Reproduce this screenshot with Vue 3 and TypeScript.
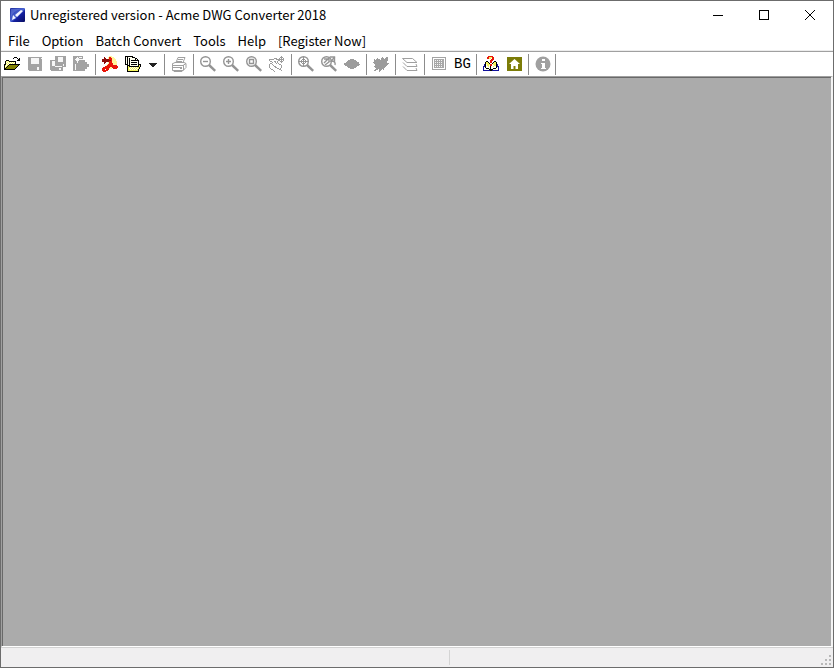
<script setup lang="ts">
type Tool = { kind: 'button'; id: string; label: string; disabled?: boolean } | { kind: 'sep'; id: string }

const menus: string[] = ['File', 'Option', 'Batch Convert', 'Tools', 'Help', '[Register Now]']

const button = (id: string, label: string, disabled = false): Tool => ({ kind: 'button', id, label, disabled })
const sep = (n: number): Tool => ({ kind: 'sep', id: `sep${n}` })

const tools: Tool[] = [
  button('open', 'Open'),
  button('save', 'Save', true),
  button('saveall', 'Save all', true),
  button('export', 'Export', true),
  sep(1),
  button('pdf', 'Convert to PDF'),
  button('batch', 'Batch convert'),
  button('more', 'More batch options'),
  sep(2),
  button('print', 'Print', true),
  sep(3),
  button('zoomout', 'Zoom out', true),
  button('zoomin', 'Zoom in', true),
  button('zoomwin', 'Zoom window', true),
  button('pan', 'Pan', true),
  sep(4),
  button('extents', 'Zoom extents', true),
  button('previous', 'Zoom previous', true),
  button('view', 'View', true),
  sep(5),
  button('regen', 'Regenerate', true),
  sep(6),
  button('layers', 'Layers', true),
  sep(7),
  button('grid', 'Layout', true),
  button('bg', 'Background'),
  sep(8),
  button('help', 'Help'),
  button('home', 'Home page'),
  sep(9),
  button('about', 'About', true),
  sep(10),
]

const palette: Record<string, string> = {
  k: '#000000', y: '#f4f45c', w: '#fffff0', o: '#808000', g: '#9c9c9c',
  r: '#e81408', d: '#8c0c08', l: '#fff59a', b: '#10109c', c: '#c8c8c8',
}

const bitmaps: Record<string, string[]> = {
  open: [
    '................',
    '..........kkk...',
    '.........k...k.k',
    '..............kk',
    '..kkk........kkk',
    '.kywykkkkkkk....',
    '.kwywywywywk....',
    '.kywywywywyk....',
    'kkwywkkkkkkkkkkk',
    'kywykoooooooook.',
    'kwykoooooooook..',
    'kykoooooooook...',
    'kkoooooooook....',
    'kkkkkkkkkkk.....',
  ],
  pdf: [
    '.......lll......',
    '..d...lrrlll....',
    '..dd..lrrrlll...',
    'dddddddrrrllll..',
    'dddddddddrllll..',
    'dddddddrrrlllll.',
    '..dd..lrrrlllll.',
    '..d...lrrrrllll.',
    '.....lrrrrrllll.',
    '....lrrrrrrrrrr.',
    '...rrrrrrrrrrrrr',
    '.rrrrrrrllrrrrrr',
    'rrrrrrrlll.rrrr.',
    'rrr.rrr.........',
    'rrrrrr..........',
    '.rrr............',
  ],
  batch: [
    'kkkkkkkk........',
    'kwkwwwwkkk......',
    'kwkwkwwwwwkk....',
    'kwkwkwwwwwkwk...',
    'kwkwkwkkkkkkkk..',
    'kwkwkwwwwwwwwk..',
    'kwkwkwkkkkkkwk..',
    'kwkwkwwwwwwwwk..',
    'kkkwkwkkkkkkwkkk',
    '..kkkwwwwwwwwkyk',
    '..kykkkkkkkkkkyk',
    '..kyywywywywyyk.',
    '..kywywywywywyk.',
    '..kyywywywywyk..',
    '..kyyyyyyyyyyk..',
    '..kkkkkkkkkkkk..',
  ],
  pan: [
    '............g...',
    '...........ggg..',
    '.....ggg..g.g.g.',
    'ggggg..gggggggg.',
    'g........gg.g.g.',
    '.gg..gg.g..ggg..',
    '...g..g.g...g...',
    '.gg....g.g......',
    'g..g......gg....',
    'g...g.......g...',
    'g....gg.....g...',
    'g.....gg....g...',
    '.g......gg.g....',
    '..gg......gg....',
    '....g.......g...',
    '.....g..........',
  ],
  view: [
    '................',
    '................',
    '................',
    '......gggg......',
    '....gggggggg....',
    '...gggggggggg...',
    '..ggggggggggggg.',
    'ggggggggggggggg.',
    'gggggggggggggggg',
    '.gggggggggggggg.',
    '...gggggggggg...',
    '....gggggggg....',
    '......gggg......',
  ],
  regen: [
    '................',
    '.........g...gg.',
    '....g...ggg.ggg.',
    '.g.gggg.ggggggg.',
    '.gggggggggggggg.',
    '.ggggggggggggg..',
    'gggggggggggggg..',
    '.ggggggggggggggg',
    '..ggggggggggggg.',
    '..gggggggggggg..',
    '.gggggggggggg...',
    '..gggggggggg....',
    '...gggggggg.....',
    '..ggg.ggg.g.....',
    '.gg...gg........',
    '......g.........',
  ],
  help: [
    '.....rrrrr......',
    '....rryyyrr.....',
    '....rryy.rr.....',
    '........rrr.....',
    '.......rrr......',
    '...kk..rr..kk...',
    '..kyyk.rr.kyyk..',
    '..kyyyk..kyyyk..',
    '.bkwyyyrrwyyykb.',
    '.bkwyywrrwwyykb.',
    'bbkwwywkwwywwkbb',
    'bwkwwwwkwwwwwkwb',
    'bwwkkkwkwwkkkwwb',
    'bwwwwwkkkkwwwwwb',
    'bbbbbbbkkbbbbbbb',
  ],
}

interface Run { x: number; y: number; n: number; fill: string }

// Merges neighbouring pixels of one colour into horizontal runs.
function runs(rows: string[]): Run[] {
  const out: Run[] = []
  rows.forEach((row, y) => {
    let x = 0
    while (x < row.length) {
      const key = row[x]
      let n = 1
      while (row[x + n] === key) n++
      if (key !== '.') out.push({ x, y, n, fill: palette[key] })
      x += n
    }
  })
  return out
}

const art: Record<string, Run[]> = Object.fromEntries(
  Object.entries(bitmaps).map(([id, rows]) => [id, runs(rows)]),
)
const lenses = ['zoomout', 'zoomin', 'zoomwin', 'extents', 'previous']
</script>

<template>
  <div class="window">
    <header class="titlebar">
      <svg class="logo" viewBox="0 0 16 16" aria-hidden="true">
        <defs>
          <linearGradient id="logoFill" x1="0" y1="0" x2="1" y2="1">
            <stop offset="0" stop-color="#1c2c9c" />
            <stop offset=".5" stop-color="#4a64d4" />
            <stop offset=".6" stop-color="#1420a0" />
            <stop offset="1" stop-color="#080c60" />
          </linearGradient>
        </defs>
        <rect x="1" y="1" width="15" height="14" rx="1" fill="url(#logoFill)" />
        <path d="M2 10V2h10Q4 4 2 10z" fill="#6f86e4" opacity=".5" />
        <path d="M3 13l1-5 3 3zM6 8l6-5 2 1-6 6z" fill="#f4f6ff" />
      </svg>
      <h1 class="title">Unregistered version - Acme DWG Converter 2018</h1>
      <div class="controls">
        <button type="button" aria-label="Minimize">
          <svg viewBox="0 0 12 12"><path d="M1 6.5h10" /></svg>
        </button>
        <button type="button" aria-label="Maximize">
          <svg viewBox="0 0 12 12"><path d="M1.5 1.5h9v9h-9z" /></svg>
        </button>
        <button type="button" aria-label="Close">
          <svg class="smooth" viewBox="0 0 12 12"><path d="M1 1l10 10M11 1L1 11" /></svg>
        </button>
      </div>
    </header>

    <nav class="menubar">
      <button v-for="m in menus" :key="m" type="button">{{ m }}</button>
    </nav>

    <div class="toolbar" role="toolbar">
      <template v-for="t in tools" :key="t.id">
        <span v-if="t.kind === 'sep'" class="sep"></span>
        <button v-else type="button" class="tool" :class="{ narrow: t.id === 'more' }" :disabled="t.disabled" :aria-label="t.label">
          <span v-if="t.id === 'bg'" class="bg">BG</span>
          <svg v-else-if="art[t.id]" class="icon pixel" viewBox="0 0 16 16">
            <rect v-for="(p, i) in art[t.id]" :key="i" :x="p.x" :y="p.y" :width="p.n" height="1" :fill="p.fill" />
          </svg>
          <svg v-else-if="t.id === 'more'" class="icon pixel" viewBox="0 0 16 16">
            <path d="M4 7h8v1h-1v1h-1v1H9v1H7v-1H6V9H5V8H4z" fill="#222" />
          </svg>
          <svg v-else-if="t.id === 'save'" class="icon pixel" viewBox="0 0 16 16">
            <path d="M1 1h14v14H2l-1-1z" fill="#a3a3a3" />
            <path d="M4 2h8v6H4zM10 11h2v3h-2zM14 2h1v1h-1z" fill="#f6f6f6" />
          </svg>
          <svg v-else-if="t.id === 'saveall'" class="icon pixel" viewBox="0 0 16 16">
            <path d="M5 0h11v11h-3v4H1l-1-1V4h5z" fill="#a3a3a3" />
            <path d="M8 1h5v5H8zM2 5h3v5H2zM13 8h1v2h-1zM9 12h2v2H9zM5 10h7v1H5z" fill="#f6f6f6" />
          </svg>
          <svg v-else-if="t.id === 'export'" class="icon pixel" viewBox="0 0 16 16">
            <path d="M0 0h10v4h2v2h2v2h2v3h-2v2h-2v2H0z" fill="#a3a3a3" />
            <path d="M2 3h8v1H2zM4 1h1v6H4zM2 8h1v6H2zM6 1h3v1H6zM3 2h3v1H3zM3 4h3v1H3z" fill="#f8f8f8" />
          </svg>
          <svg v-else-if="t.id === 'print'" class="icon line" viewBox="0 0 16 16">
            <path d="M5 6.500l2-5h7l-2 5M7 3.500h5M6 5.500h5M1 8l3-1.500h9l2 1v4l-3 3H1.500V8M1 9.500h11l3-2M12.500 9v5M2 11.500h9M2 14l1 1.500h8l2-2M9 12.500h2" />
          </svg>
          <svg v-else-if="lenses.includes(t.id)" class="icon lens" viewBox="0 0 16 16">
            <circle cx="5.5" cy="5.5" r="4.8" />
            <path class="handle" d="M9 9l6.200 5.800" />
            <path v-if="t.id === 'zoomout'" d="M3 5.500h5" />
            <path v-if="t.id === 'zoomin'" d="M3 5.500h5M5.500 3v5" />
            <path v-if="t.id === 'zoomwin'" d="M3.500 3.500h4v4h-4z" />
            <path v-if="t.id === 'extents'" class="fine" d="M1 5.500h9M5.500 1v9M3.500 4v3M7.500 4v3M4 3.500h3M4 7.500h3" />
            <path v-if="t.id === 'previous'" d="M9 1h4.500v5M14 1l-4 4q5 0 4 4M3 7l5-5v4L4 9M3 3h4" />
          </svg>
          <svg v-else-if="t.id === 'layers'" class="icon line" viewBox="0 0 16 16">
            <path d="M0.500 2.500h10l4.500 4h-10zM1 6.500l4 4h10l-1-2.500M1 10.500l4 4h10l-1-2.500" />
          </svg>
          <svg v-else-if="t.id === 'grid'" class="icon pixel" viewBox="0 0 16 16">
            <path d="M1.500 1.500h13v12h-13z" fill="none" stroke="#a3a3a3" />
            <path d="M3 3h10v9H3z" fill="#a8a8a8" />
            <path d="M4 4.500h8M4 6.500h8M4 8.500h8M4 10.500h8" stroke="#f4f4f4" stroke-dasharray="1 1" />
          </svg>
          <svg v-else-if="t.id === 'home'" class="icon" viewBox="0 0 16 16">
            <rect x="1" y="1" width="15" height="14" fill="#7c7c08" />
            <path d="M8.500 3L3 8h2v5h2.500v-3h2v3H12V8h2z" fill="#fff" />
          </svg>
          <svg v-else class="icon" viewBox="0 0 16 16">
            <circle cx="8" cy="8" r="7.5" fill="#a0a0a0" />
            <path d="M7 3h3v2H7zM6 7h4v5h1v1H6v-1h1V8H6z" fill="#fff" />
          </svg>
        </button>
      </template>
    </div>

    <main class="canvas"></main>

    <footer class="statusbar">
      <span class="pane first"></span>
      <span class="pane"></span>
      <svg class="grip" viewBox="0 0 12 12" aria-hidden="true">
        <path d="M8 0h2v2H8zM4 4h2v2H4zM8 4h2v2H8zM0 8h2v2H0zM4 8h2v2H4zM8 8h2v2H8z" fill="#b8b8b8" />
      </svg>
    </footer>
  </div>
</template>

<style>
body {
  margin: 0;
}
</style>

<style scoped>
.window {
  box-sizing: border-box;
  display: flex;
  flex-direction: column;
  min-height: 100vh;
  border: 1px solid #6c6c6c;
  background: #fff;
  color: #000;
  font: 13px/18px "Noto Sans CJK SC", "Noto Sans", sans-serif;
}
button {
  padding: 0;
  border: 0;
  background: none;
  color: inherit;
  font: inherit;
}
svg {
  display: block;
}
.titlebar {
  display: flex;
  align-items: center;
  height: 28px;
  padding-left: 8px;
}
.logo {
  width: 16px;
  height: 16px;
}
.title {
  flex: 1;
  margin: 0 0 0 5px;
  font-size: 13px;
  font-weight: 400;
}
.controls {
  display: flex;
}
.controls button {
  display: grid;
  place-items: center;
  width: 46px;
  height: 28px;
}
.controls svg {
  width: 12px;
  height: 12px;
  fill: none;
  stroke: #000;
  shape-rendering: crispEdges;
}
.controls .smooth {
  shape-rendering: auto;
}
.menubar {
  display: flex;
  padding: 3px 1px 0;
  border-bottom: 1px solid #ececec;
}
.menubar button {
  padding: 0 6px;
}
.toolbar {
  display: flex;
  align-items: center;
  height: 24px;
  border-top: 1px solid #a0a0a0;
}
.tool {
  box-sizing: border-box;
  display: grid;
  align-items: center;
  justify-content: start;
  flex: none;
  width: 23px;
  height: 22px;
  padding-left: 3px;
}
.narrow {
  width: 17px;
  padding-left: 0;
}
.sep {
  flex: none;
  box-sizing: border-box;
  width: 6px;
  height: 21px;
  padding-left: 2px;
}
.sep:last-child {
  padding-left: 0;
}
.sep::before {
  content: "";
  display: block;
  width: 1px;
  height: 100%;
  background: #8c8c8c;
}
.icon {
  width: 16px;
  height: 16px;
}
.pixel {
  shape-rendering: crispEdges;
}
.line {
  fill: none;
  stroke: #a0a0a0;
}
.lens {
  fill: none;
  stroke: #949494;
  stroke-width: 1.4;
}
.fine {
  stroke-width: 1;
}
.handle {
  stroke-width: 2.4;
}
.bg {
  font: 14px/16px "Liberation Mono", monospace;
}
.canvas {
  flex: 1;
  border: 1px solid;
  border-color: #a0a0a0 #f4f4f4 #fff #a0a0a0;
  border-right-width: 2px;
  background: #ababab;
  box-shadow: inset 1px 1px #696969;
}
.statusbar {
  display: flex;
  align-items: stretch;
  height: 19px;
  border-top: 1px solid #d2d2d2;
  background: #f0eff0;
}
.pane {
  flex: 1;
}
.first {
  flex: 0 0 54%;
  box-sizing: border-box;
  margin: 2px 0;
  border-right: 1px solid #d4d4d4;
}
.grip {
  align-self: flex-end;
  width: 12px;
  height: 12px;
}
</style>
